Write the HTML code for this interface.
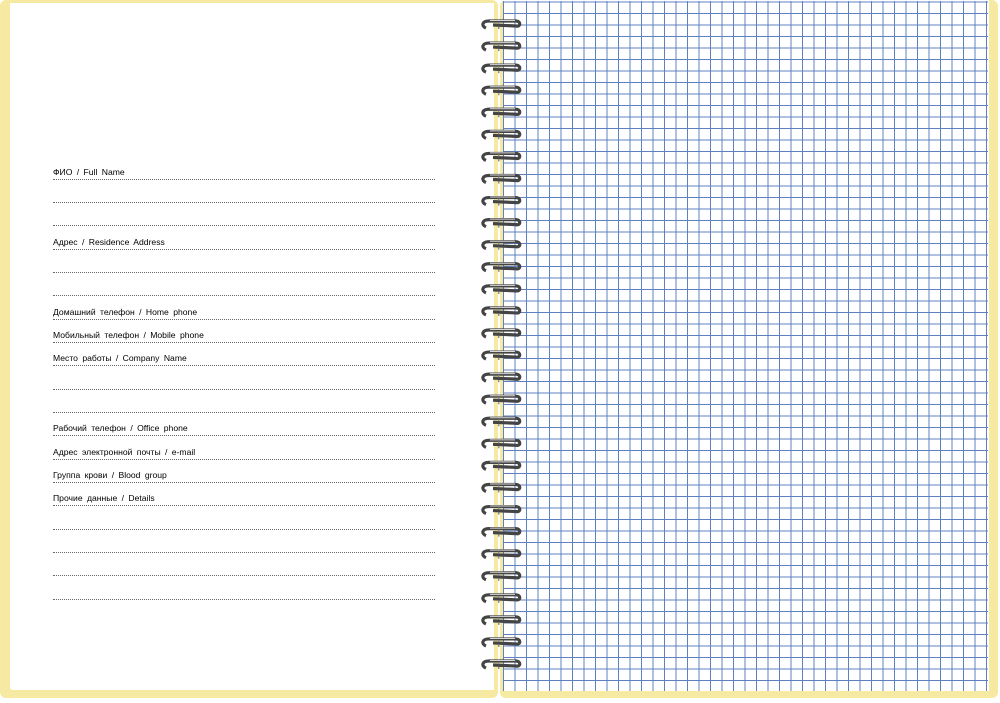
<!DOCTYPE html>
<html><head><meta charset="utf-8"><style>
body{margin:0;width:1000px;height:703px;background:#fff;position:relative;overflow:hidden;font-family:"Liberation Sans",sans-serif}
.cov{position:absolute;background:#f6e9a2;border-radius:6px}
.pg{position:absolute;background:#fff}
.grid{position:absolute;left:503px;top:1px;width:485px;height:690px;
background-image:linear-gradient(to right,#5f80c0 1px,transparent 1px),linear-gradient(to bottom,#5f80c0 1px,transparent 1px);
background-size:11.5px 11.5px;background-position:0px 0px,0 12px}
.row{position:absolute;left:53px;width:382px;height:12px;border-bottom:1px dotted #666;font-size:8.6px;color:#000;line-height:10px;word-spacing:2px}
</style></head><body>
<div class="cov" style="left:0;top:0;width:498px;height:698px"></div>
<div class="pg" style="left:10px;top:3px;width:484px;height:687px;border-radius:0 0 0 3px"></div>
<div class="cov" style="left:500px;top:0;width:498px;height:698px"></div>
<div class="pg" style="left:503px;top:0;width:486px;height:691px"></div>
<div class="grid"></div>

<div class="row" style="top:167px">ФИО / Full Name</div>
<div class="row" style="top:190px"></div>
<div class="row" style="top:213px"></div>
<div class="row" style="top:237px">Адрес / Residence Address</div>
<div class="row" style="top:260px"></div>
<div class="row" style="top:283px"></div>
<div class="row" style="top:307px">Домашний телефон / Home phone</div>
<div class="row" style="top:330px">Мобильный телефон / Mobile phone</div>
<div class="row" style="top:353px">Место работы / Company Name</div>
<div class="row" style="top:377px"></div>
<div class="row" style="top:400px"></div>
<div class="row" style="top:423px">Рабочий телефон / Office phone</div>
<div class="row" style="top:447px">Адрес электронной почты / e-mail</div>
<div class="row" style="top:470px">Группа крови / Blood group</div>
<div class="row" style="top:493px">Прочие данные / Details</div>
<div class="row" style="top:517px"></div>
<div class="row" style="top:540px"></div>
<div class="row" style="top:563px"></div>
<div class="row" style="top:587px"></div>

<svg style="position:absolute;left:0;top:0" width="1000" height="703" xmlns="http://www.w3.org/2000/svg" xmlns:xlink="http://www.w3.org/1999/xlink">
<defs><g id="c">
<path d="M486 4 C481 2 482 -3 489 -3 L516 -3 C521 -3 521 3 516 2 L493 1" fill="none" stroke="#444" stroke-width="3.2"/>
<path d="M490 -3.5 L515 -3.5" fill="none" stroke="#d8d8d8" stroke-width="1"/>
<rect x="498" y="-2" width="1.5" height="2" fill="#888"/><rect x="498" y="3" width="1.5" height="2" fill="#888"/>
</g></defs>
<use xlink:href="#c" href="#c" y="24"/>
<use xlink:href="#c" href="#c" y="46.07"/>
<use xlink:href="#c" href="#c" y="68.14"/>
<use xlink:href="#c" href="#c" y="90.21"/>
<use xlink:href="#c" href="#c" y="112.28"/>
<use xlink:href="#c" href="#c" y="134.35"/>
<use xlink:href="#c" href="#c" y="156.42"/>
<use xlink:href="#c" href="#c" y="178.49"/>
<use xlink:href="#c" href="#c" y="200.56"/>
<use xlink:href="#c" href="#c" y="222.63"/>
<use xlink:href="#c" href="#c" y="244.7"/>
<use xlink:href="#c" href="#c" y="266.77"/>
<use xlink:href="#c" href="#c" y="288.84"/>
<use xlink:href="#c" href="#c" y="310.91"/>
<use xlink:href="#c" href="#c" y="332.98"/>
<use xlink:href="#c" href="#c" y="355.05"/>
<use xlink:href="#c" href="#c" y="377.12"/>
<use xlink:href="#c" href="#c" y="399.19"/>
<use xlink:href="#c" href="#c" y="421.26"/>
<use xlink:href="#c" href="#c" y="443.33"/>
<use xlink:href="#c" href="#c" y="465.4"/>
<use xlink:href="#c" href="#c" y="487.47"/>
<use xlink:href="#c" href="#c" y="509.54"/>
<use xlink:href="#c" href="#c" y="531.61"/>
<use xlink:href="#c" href="#c" y="553.68"/>
<use xlink:href="#c" href="#c" y="575.75"/>
<use xlink:href="#c" href="#c" y="597.82"/>
<use xlink:href="#c" href="#c" y="619.89"/>
<use xlink:href="#c" href="#c" y="641.96"/>
<use xlink:href="#c" href="#c" y="664.03"/>
</svg>
</body></html>
